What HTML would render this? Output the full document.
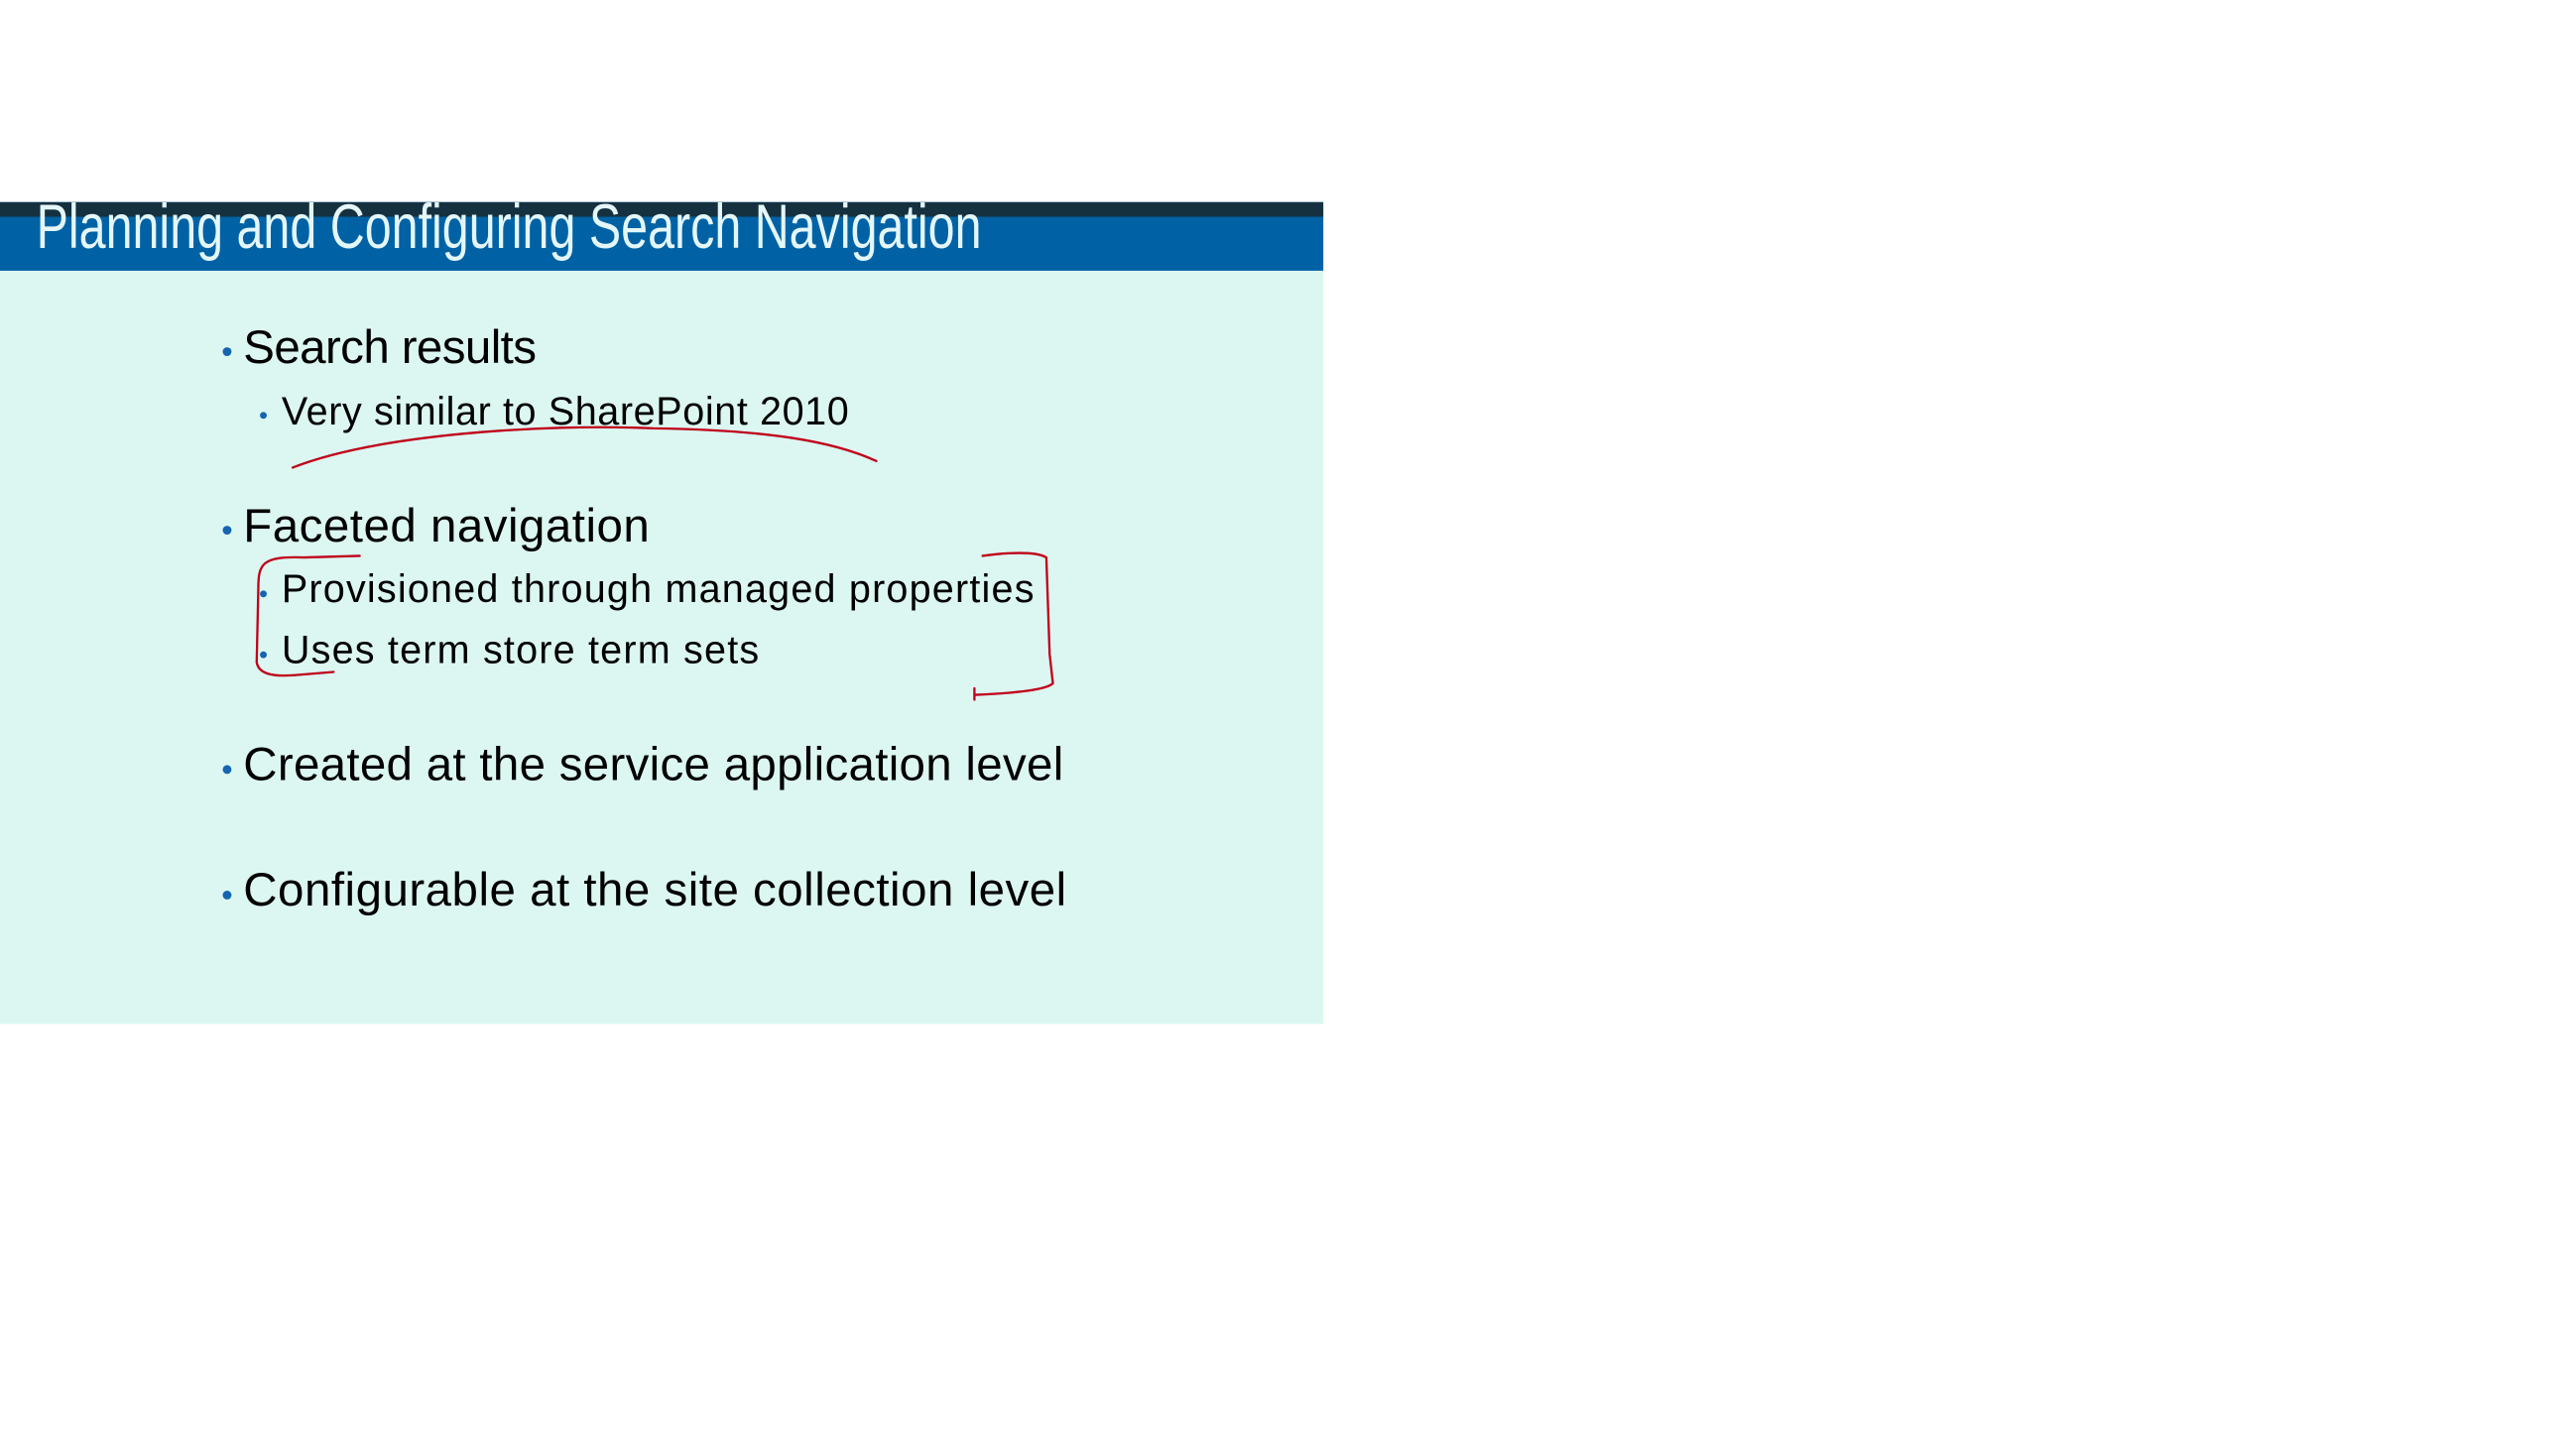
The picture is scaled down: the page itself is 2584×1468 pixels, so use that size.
<!DOCTYPE html>
<html><head><meta charset="utf-8"><style>
html,body{margin:0;padding:0;background:#fff;width:2584px;height:1468px;overflow:hidden;position:relative;font-family:"Liberation Sans",sans-serif;}
#w{position:absolute;left:0;top:0;width:2584px;height:1468px;transform:scale(0.989);transform-origin:0 0;}
.slide{position:absolute;left:0;top:206px;width:1349px;height:838px;background:#dcf7f1;}
.blue{position:absolute;left:0;top:206px;width:1349px;height:70px;background:#0062a5;overflow:hidden;}
.dark{position:absolute;left:0;top:0;width:1349px;height:15px;background:#15303f;}
.title{position:absolute;left:37px;top:-7px;font-size:64px;line-height:64px;color:#e4f6f8;white-space:nowrap;transform:scaleX(0.765);transform-origin:0 0;}
.t{position:absolute;white-space:nowrap;color:#000;line-height:1;}
.l1{font-size:48px;left:248px;letter-spacing:0.5px;}
.l2{font-size:40px;left:287px;letter-spacing:1.2px;}
.d{position:absolute;border-radius:50%;background:#1565b0;}
</style></head><body>
<div id="w">
<div class="slide"></div>
<div class="blue"><div class="dark"></div><div class="title">Planning and Configuring Search Navigation</div></div>

<div class="d" style="left:227px;top:354px;width:9px;height:9px"></div>
<div class="t l1" style="top:331px;letter-spacing:-0.6px">Search results</div>
<div class="d" style="left:265px;top:420px;width:7px;height:7px"></div>
<div class="t l2" style="top:400px;letter-spacing:0.6px">Very similar to SharePoint 2010</div>

<div class="d" style="left:227px;top:536px;width:9px;height:9px"></div>
<div class="t l1" style="top:513px">Faceted navigation</div>
<div class="d" style="left:265px;top:602px;width:7px;height:7px"></div>
<div class="t l2" style="top:581px">Provisioned through managed properties</div>
<div class="d" style="left:265px;top:664px;width:7px;height:7px"></div>
<div class="t l2" style="top:643px">Uses term store term sets</div>

<div class="d" style="left:227px;top:780px;width:9px;height:9px"></div>
<div class="t l1" style="top:756px;letter-spacing:0.3px">Created at the service application level</div>
<div class="d" style="left:227px;top:908px;width:9px;height:9px"></div>
<div class="t l1" style="top:884px">Configurable at the site collection level</div>

<svg style="position:absolute;left:0;top:0" width="2584" height="1468" viewBox="0 0 1550.4 880.8" fill="none" stroke="#c0001a" stroke-width="1.4" stroke-linecap="round">
<path d="M179 286 C 230 266, 330 259, 400 262 C 470 263, 510 270, 536 282"/>
<path d="M220 340 L 186 341 C 160 340 158 345 158 360 L 157 405 C 158 412 166 414 180 413 L 204 411"/>
<path d="M601 340 C 615 338, 634 337, 640 341 L 642 400 L 644 418 C 640 422 620 424 597 425 M596 421 L596 428"/>
</svg>
</div>
</body></html>
